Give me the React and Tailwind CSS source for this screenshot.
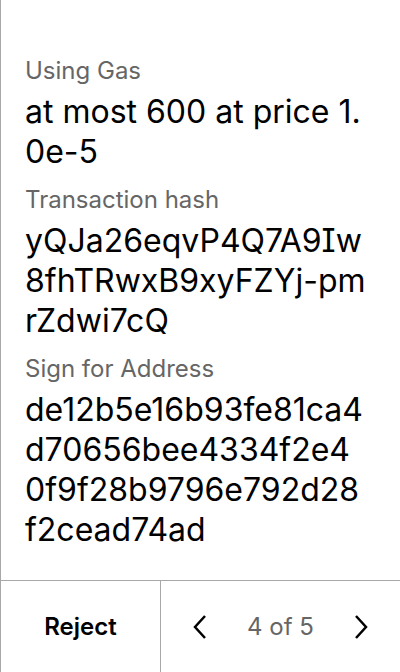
export default function App() {
  const fields = [
    { label: 'Using Gas', value: 'at most 600 at price 1.0e-5' },
    { label: 'Transaction hash', value: 'yQJa26eqvP4Q7A9Iw8fhTRwxB9xyFZYj-pmrZdwi7cQ' },
    { label: 'Sign for Address', value: 'de12b5e16b93fe81ca4d70656bee4334f2e40f9f28b9796e792d28f2cead74ad' },
  ];

  return (
    <div className="w-[400px] h-[672px] bg-white border-l border-[#a8a8a8] flex flex-col font-['Inter',sans-serif]">
      <div className="flex-1 pt-[55px] pl-[24px] pr-[30px]">
        {fields.map((f) => (
          <div key={f.label} className="mb-[12px]">
            <p className="text-[24px] leading-[32px] mb-[5px] text-[#666]">{f.label}</p>
            <p className="text-[32px] leading-[40px] text-black break-all [font-feature-settings:'cv08']">{f.value}</p>
          </div>
        ))}
      </div>

      <div className="h-[92px] border-t border-[#a8a8a8] flex">
        <button className="w-[160px] border-r border-[#a8a8a8] flex items-center justify-center text-[24px] font-semibold text-black">
          Reject
        </button>
        <div className="flex-1 flex items-center justify-between px-[31px]">
          <svg width="16" height="26" viewBox="0 0 16 26" fill="none" stroke="black" strokeWidth="2.5">
            <polyline points="13 2 3 13 13 24" />
          </svg>
          <span className="text-[24px] text-[#666]">4 of 5</span>
          <svg width="16" height="26" viewBox="0 0 16 26" fill="none" stroke="black" strokeWidth="2.5">
            <polyline points="3 2 13 13 3 24" />
          </svg>
        </div>
      </div>
    </div>
  );
}
